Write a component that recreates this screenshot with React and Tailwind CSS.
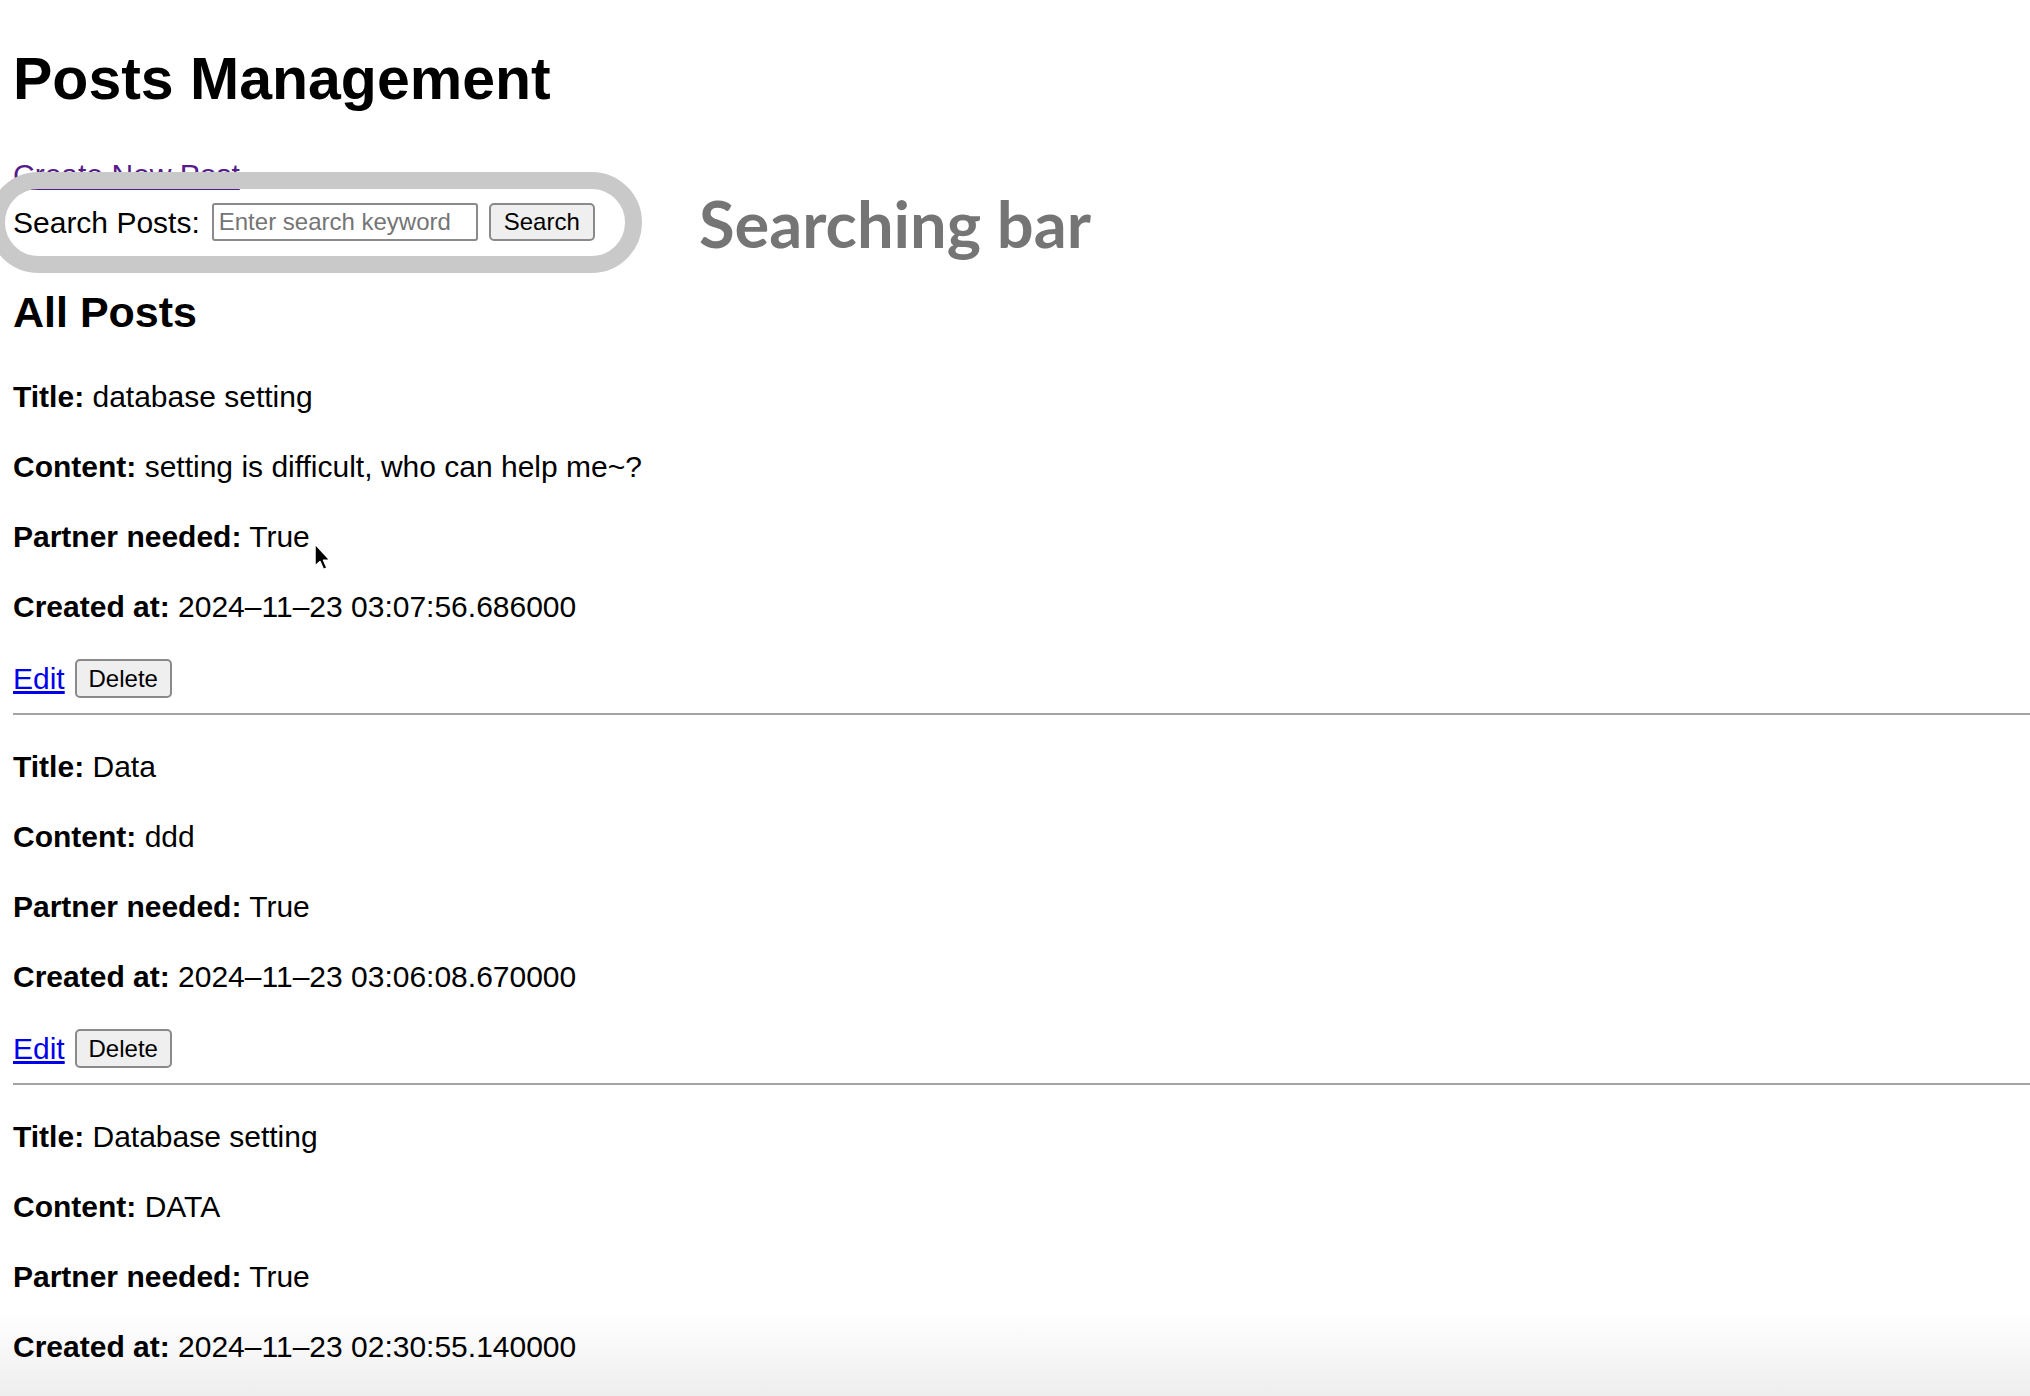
import React from "react";

const posts = [
    { id: 1, title: "database setting", content: "setting is difficult, who can help me~?", partner: "True", created: "2024–11–23 03:07:56.686000" },
    { id: 2, title: "Data", content: "ddd", partner: "True", created: "2024–11–23 03:06:08.670000" },
    { id: 3, title: "Database setting", content: "DATA", partner: "True", created: "2024–11–23 02:30:55.140000" },
];

function Field({ label, value }) {
    return (
        <p className="text-[30px] leading-[35px] h-[35px]">
            <strong className="font-bold">{label}:</strong> {value}
        </p>
    );
}

function PostItem({ post }) {
    return (
        <div className="flex flex-col">
            <div className="flex flex-col gap-[35px]">
                <Field label="Title" value={post.title} />
                <Field label="Content" value={post.content} />
                <Field label="Partner needed" value={post.partner} />
                <Field label="Created at" value={post.created} />
            </div>
            <div className="mt-[35px] flex items-center gap-[10px] h-[39px]">
                <a href="#" className="text-[30px] leading-[35px] text-[#0000ee] underline">Edit</a>
                <button className="h-[39px] w-[97px] rounded-[5px] border-2 border-[#8a8a8a] bg-[#efefef] text-[24px] leading-none text-black">
                    Delete
                </button>
            </div>
            <hr className="mt-[15px] mb-[34px] h-[2px] border-0 bg-[#a4a4a4]" />
        </div>
    );
}

export default function App() {
    return (
        <div className="relative h-[1396px] overflow-hidden bg-gradient-to-b from-white from-[94%] to-[#eeeeee] pl-[13px] text-black font-['Liberation_Sans',Arial,sans-serif]">
            <h1 className="pt-[50px] text-[59px] leading-[58px] font-bold">Posts Management</h1>

            <a href="#" className="mt-[49px] block w-fit text-[30px] leading-[35px] text-[#551a8b] underline">Create New Post</a>

            {/* search */}
            <div className="mt-[11px] flex items-center h-[38px]">
                <label className="text-[30px] leading-[35px]">Search Posts:</label>
                <input
                    type="text"
                    placeholder="Enter search keyword"
                    className="ml-[12px] h-[38px] w-[266px] rounded-[3px] border-2 border-[#8a8a8a] bg-white px-[5px] text-[24px] placeholder:text-[#757575] outline-none"
                />
                <button className="ml-[11px] h-[38px] w-[106px] rounded-[5px] border-2 border-[#8a8a8a] bg-[#efefef] text-[24px] leading-none">
                    Search
                </button>
            </div>

            <h2 className="mt-[46px] text-[43px] leading-[50px] font-bold">All Posts</h2>

            <div className="mt-[42px]">
                {posts.map((post) => (
                    <PostItem key={post.id} post={post} />
                ))}
            </div>

            {/* annotation ring */}
            <div className="pointer-events-none absolute left-[-12px] top-[172px] h-[101px] w-[654px] rounded-full border-[17px] border-[#c9c9c9]"></div>
            <div className="pointer-events-none absolute left-[699px] top-[186px] text-[65px] leading-[75px] font-bold text-[#757575] font-['Lato',sans-serif]">
                Searching bar
            </div>

            {/* mouse cursor */}
            <svg className="pointer-events-none absolute left-[313px] top-[543px]" width="20" height="30" viewBox="0 0 20 30">
                <path d="M2 1 L2 23 L7 18.5 L10.5 26.5 L14 25 L10.5 17.2 L17 17.2 Z" fill="black" stroke="white" strokeWidth="1.5" strokeLinejoin="round" />
            </svg>
        </div>
    );
}
